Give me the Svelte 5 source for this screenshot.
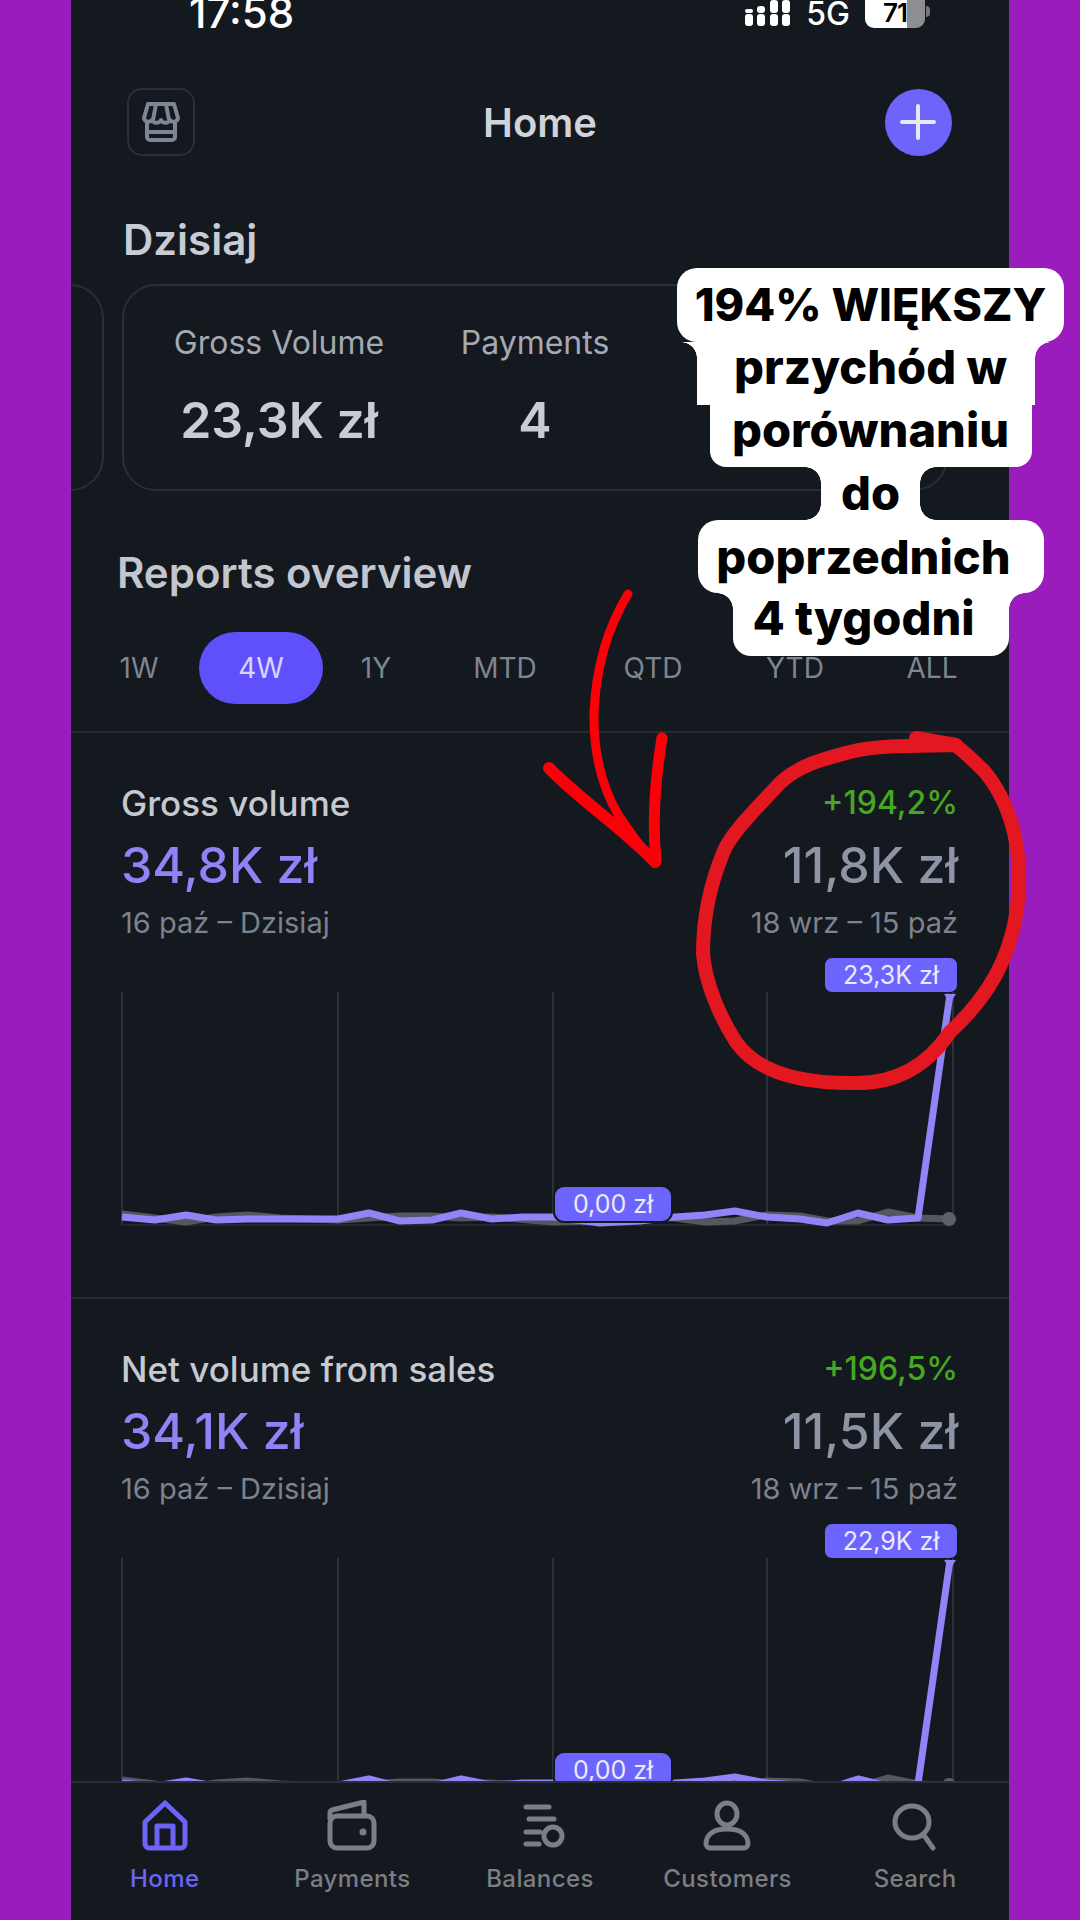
<script>
	const tabs = ['1W', '4W', '1Y', 'MTD', 'QTD', 'YTD', 'ALL'];

	const purple = '122,225 155,228 186,223 216,228 248,227 338,227 369,221 400,229 432,228 461,221 492,227 523,225 553,225 600,231 640,229 675,225 705,223 735,219 767,225 800,227 827,231 858,221 888,228 918,226 950,2'
		.split(' ').map(shift).join(' ');
	const grey = '122,222 155,226 186,230 216,225 248,223 280,226 338,228 369,226 400,224 432,224 461,226 492,225 553,230 600,229 640,222 675,226 705,230 735,229 767,223 800,224 827,229 858,229 888,220 918,226 949,227'
		.split(' ').map(shift).join(' ');

	function shift(p) {
		const [x, y] = p.split(',').map(Number);
		return `${x - 122},${y}`;
	}

	const sections = [
		{ title: 'Gross volume', value: '34,8K zł', change: '+194,2%', prev: '11,8K zł', peak: '23,3K zł' },
		{ title: 'Net volume from sales', value: '34,1K zł', change: '+196,5%', prev: '11,5K zł', peak: '22,9K zł' }
	];
</script>

<div class="phone">
	<div class="status">
		<span class="time">17:58</span>
		<div class="status_right">
			<svg width="46" height="28" viewBox="0 0 46 28" fill="#fff">
				<rect x="0" y="14" width="8" height="12" rx="3" />
				<rect x="12" y="14" width="8" height="12" rx="3" />
				<rect x="25" y="14" width="8" height="12" rx="3" />
				<rect x="37" y="14" width="8" height="12" rx="3" />
				<rect x="0" y="9" width="8" height="4" rx="2" />
				<rect x="12" y="6" width="8" height="7" rx="3" />
				<rect x="25" y="0" width="8" height="13" rx="3" />
				<rect x="37" y="0" width="8" height="13" rx="3" />
			</svg>
			<span class="net">5G</span>
			<div class="battery"><span>71</span></div>
		</div>
	</div>

	<header class="top">
		<button class="store" aria-label="Store">
			<svg width="40" height="40" viewBox="0 0 40 40" fill="none" stroke="#7f8593" stroke-width="4" stroke-linejoin="round">
				<path d="M7 2h26l4 14a4.5 4.5 0 0 1-8 2 5 5 0 0 1-9 0 5 5 0 0 1-9 0 4.5 4.5 0 0 1-8-2z" />
				<path d="M15 2l-3 16M25 2l3 16" />
				<path d="M6 21v14a3 3 0 0 0 3 3h22a3 3 0 0 0 3-3V21M6 30h28" />
			</svg>
		</button>
		<h1>Home</h1>
		<button class="add" aria-label="Add">
			<svg width="36" height="36" viewBox="0 0 36 36" stroke="#e8e8f4" stroke-width="4" stroke-linecap="round">
				<path d="M18 2v32M2 18h32" />
			</svg>
		</button>
	</header>

	<main class="content">
		<h2 class="today">Dzisiaj</h2>
		<div class="cards">
			<div class="card prev_card"></div>
			<div class="card">
				<div class="stat stat_volume">
					<span class="stat_label">Gross Volume</span>
					<span class="stat_value">23,3K zł</span>
				</div>
				<div class="stat stat_payments">
					<span class="stat_label">Payments</span>
					<span class="stat_value">4</span>
				</div>
			</div>
		</div>

		<h2 class="reports">Reports overview</h2>
		<div class="tabs">
			{#each tabs as tab}
				<span class="tab" class:active={tab === '4W'}>{tab}</span>
			{/each}
		</div>

		{#each sections as s}
			<section class="report">
				<div class="report_head">
					<div class="col">
						<span class="title">{s.title}</span>
						<span class="value">{s.value}</span>
						<span class="dates">16 paź – Dzisiaj</span>
					</div>
					<div class="col col_right">
						<span class="change">{s.change}</span>
						<span class="value value_prev">{s.prev}</span>
						<span class="dates">18 wrz – 15 paź</span>
					</div>
				</div>
				<div class="chart">
					<svg width="836" height="240" viewBox="0 0 836 240" fill="none">
						{#each [0, 216, 431, 645, 831] as x}
							<path d="M{x} 0V233" stroke="#2e3238" stroke-width="2" />
						{/each}
						<path d="M0 233H831" stroke="#23272d" stroke-width="2" />
						<polyline points={grey} stroke="#53575e" stroke-width="7" stroke-linejoin="round" />
						<circle cx="827" cy="227" r="7" fill="#5c6068" />
						<polyline points={purple} stroke="#9184f8" stroke-width="7" stroke-linejoin="round" />
						<path d="M822 2h12l-6 9z" fill="#9184f8" />
					</svg>
					<span class="tag tag_peak">{s.peak}</span>
					<span class="tag tag_zero">0,00 zł</span>
				</div>
			</section>
		{/each}
	</main>

	<nav class="nav">
		<div class="nav_item active">
			<svg width="60" height="52" viewBox="0 0 60 52" fill="none" stroke="currentColor" stroke-width="5" stroke-linejoin="round">
				<path d="M30 3L50 22V44a4 4 0 0 1-4 4H14a4 4 0 0 1-4-4V22z" />
				<path d="M22 48V26H38V48" />
			</svg>
			<span>Home</span>
		</div>
		<div class="nav_item">
			<svg width="60" height="52" viewBox="0 0 60 52" fill="none" stroke="currentColor" stroke-width="5" stroke-linejoin="round">
				<path d="M8 20V13a3 3 0 0 1 2-3L42 2V16" />
				<rect x="8" y="16" width="44" height="32" rx="7" />
				<circle cx="41" cy="32" r="3.5" fill="currentColor" stroke="none" />
			</svg>
			<span>Payments</span>
		</div>
		<div class="nav_item">
			<svg width="60" height="52" viewBox="0 0 60 52" fill="none" stroke="currentColor" stroke-width="5" stroke-linecap="round">
				<path d="M16 7H39M19 19H44M16 32H30M16 44H29" />
				<circle cx="43" cy="36" r="9" />
			</svg>
			<span>Balances</span>
		</div>
		<div class="nav_item">
			<svg width="60" height="52" viewBox="0 0 60 52" fill="none" stroke="currentColor" stroke-width="5" stroke-linejoin="round">
				<ellipse cx="29" cy="14" rx="10" ry="11" />
				<path d="M8 44c0-10 8-15 21-15s21 5 21 15a4 4 0 0 1-4 4H12a4 4 0 0 1-4-4z" />
			</svg>
			<span>Customers</span>
		</div>
		<div class="nav_item">
			<svg width="60" height="52" viewBox="0 0 60 52" fill="none" stroke="currentColor" stroke-width="5" stroke-linecap="round">
				<ellipse cx="27" cy="22" rx="17" ry="16" />
				<path d="M38 34L48 48" />
			</svg>
			<span>Search</span>
		</div>
	</nav>

	<!-- naklejka z filmu, leży na ekranie -->
	<div class="sticker">
		<span class="line line_first">194% WIĘKSZY</span>
		<span class="line line_top">przychód w</span>
		<span class="line">porównaniu</span>
		<span class="line line_both">do</span>
		<span class="line line_wide">poprzednich</span>
		<span class="line line_top">4 tygodni</span>
	</div>

	<svg class="scribble" width="1009" height="1920" viewBox="71 0 1009 1920" fill="none" stroke-linecap="round" stroke-linejoin="round">
		<path d="M628 594C606 630 596 670 594 712C593 760 606 800 626 826C640 846 650 858 655 862" stroke="#fa0008" stroke-width="9" />
		<path d="M549 768C580 800 625 830 655 862" stroke="#fa0008" stroke-width="12" />
		<path d="M662 738C655 780 652 820 656 860" stroke="#fa0008" stroke-width="11" />
		<path d="M916 738L956 745C930 746 880 744 850 752C820 760 800 765 781 782C750 815 730 835 723 853C710 885 703 920 703 953C705 985 722 1020 736 1042C757 1072 800 1084 857 1083C900 1083 930 1062 950 1032C985 1000 1012 960 1018 900C1022 860 1016 810 985 772C975 762 965 752 955 745" stroke="#e3171f" stroke-width="14" />
	</svg>
</div>

<style>
	:global(body) {
		margin: 0;
		background: #9a1cbc;
		overflow: hidden;
	}

	.phone {
		position: relative;
		box-sizing: border-box;
		width: 938px;
		height: 1920px;
		margin: 0 0 0 71px;
		background: #14181f;
		color: #c9ccd4;
		font-family: Inter, 'Liberation Sans', sans-serif;
		display: flex;
		flex-direction: column;
	}

	.status {
		height: 88px;
		flex: none;
		display: flex;
		justify-content: space-between;
		align-items: flex-start;
		padding: 0 83px 0 118px;
		box-sizing: border-box;
		color: #fff;
	}

	.time {
		font-size: 42px;
		font-weight: 500;
		line-height: 42px;
		margin-top: -8px;
	}

	.status_right {
		display: flex;
		align-items: flex-start;
		gap: 15px;
		margin-right: 1px;
	}

	.net {
		font-size: 32px;
		font-weight: 500;
		line-height: 32px;
		margin-top: -2px;
	}

	.battery {
		position: relative;
		width: 60px;
		height: 28px;
		border-radius: 0 0 9px 9px;
		background: linear-gradient(90deg, #fff 70%, #8e8e90 70%);
		color: #000;
		font-size: 26px;
		font-weight: 600;
		line-height: 26px;
		letter-spacing: -1px;
		text-align: center;
	}

	.battery::after {
		content: '';
		position: absolute;
		right: -5px;
		top: 6px;
		width: 4px;
		height: 11px;
		border-radius: 0 4px 4px 0;
		background: #77777a;
	}

	.top {
		display: flex;
		justify-content: space-between;
		align-items: center;
		padding: 0 57px 0 56px;
		height: 68px;
		flex: none;
	}

	.top h1 {
		margin: 0;
		font-size: 40px;
		font-weight: 600;
		color: #d0d3da;
	}

	button {
		padding: 0;
		display: flex;
		align-items: center;
		justify-content: center;
	}

	.store {
		width: 68px;
		height: 68px;
		border: 2px solid #2a2e35;
		border-radius: 15px;
		background: none;
	}

	.add {
		width: 67px;
		height: 67px;
		border: none;
		border-radius: 50%;
		background: #6e64fa;
	}

	.content {
		flex: 1;
		overflow: hidden;
		min-height: 0;
	}

	.today {
		margin: 61px 0 0 52px;
		font-size: 42px;
		line-height: 46px;
		font-weight: 600;
		color: #c9ccd4;
	}

	.cards {
		display: flex;
		gap: 18px;
		margin-top: 21px;
		margin-left: -100px;
	}

	.card {
		box-sizing: border-box;
		width: 826px;
		height: 207px;
		border: 2px solid #2a2e35;
		border-radius: 34px;
		flex: none;
		position: relative;
		display: flex;
	}

	.prev_card {
		width: 133px;
	}

	.stat {
		display: flex;
		flex-direction: column;
		align-items: center;
		padding-top: 38px;
	}

	.stat_volume {
		width: 212px;
		margin-left: 49px;
	}

	.stat_payments {
		width: 152px;
		margin-left: 74px;
	}

	.stat_label {
		font-size: 32px;
		line-height: 38px;
		color: #a5a9b2;
		white-space: nowrap;
	}

	.stat_value {
		font-size: 50px;
		line-height: 60px;
		font-weight: 600;
		color: #c9ccd4;
		margin-top: 28px;
		white-space: nowrap;
	}

	.reports {
		margin: 58px 0 0 46px;
		font-size: 42px;
		line-height: 48px;
		font-weight: 600;
		color: #c3c6cf;
	}

	.tabs {
		display: flex;
		align-items: center;
		margin-top: 35px;
		height: 72px;
		padding-left: 47px;
	}

	.tab {
		font-size: 28px;
		color: #7f8591;
		flex: none;
		text-align: center;
	}

	.tab:nth-child(1) {
		width: 42px;
	}
	.tab:nth-child(2) {
		width: 124px;
		margin-left: 39px;
	}
	.tab:nth-child(3) {
		width: 40px;
		margin-left: 33px;
	}
	.tab:nth-child(4) {
		width: 64px;
		margin-left: 77px;
	}
	.tab:nth-child(5) {
		width: 64px;
		margin-left: 84px;
	}
	.tab:nth-child(6) {
		width: 56px;
		margin-left: 81px;
	}
	.tab:nth-child(7) {
		width: 52px;
		margin-left: 84px;
	}

	.tab.active {
		background: #5f50fb;
		color: #d8d6ff;
		height: 72px;
		line-height: 72px;
		border-radius: 36px;
	}

	.report {
		box-sizing: border-box;
		height: 566px;
		border-top: 2px solid #282c32;
		margin-top: 27px;
		padding: 51px 51px 0;
	}

	.report + .report {
		margin-top: 0;
	}

	.report_head {
		display: flex;
		justify-content: space-between;
	}

	.col {
		display: flex;
		flex-direction: column;
	}

	.col_right {
		align-items: flex-end;
	}

	.title {
		font-size: 35px;
		line-height: 38px;
		font-weight: 500;
		color: #c6c9d0;
		margin-left: -1px;
	}

	.change {
		font-size: 32px;
		line-height: 38px;
		font-weight: 500;
		color: #46a820;
	}

	.value {
		font-size: 50px;
		line-height: 66px;
		font-weight: 500;
		color: #8f83f5;
		margin-top: 10px;
		margin-left: -1px;
	}

	.value_prev {
		color: #8e94a3;
	}

	.dates {
		font-size: 29px;
		line-height: 36px;
		color: #7d828c;
		margin-top: 7px;
		margin-left: -1px;
	}

	.chart {
		position: relative;
		margin-top: 51px;
		height: 240px;
	}

	.chart svg {
		display: block;
		overflow: visible;
	}

	.tag {
		position: absolute;
		box-sizing: border-box;
		height: 34px;
		line-height: 34px;
		text-align: center;
		font-size: 25px;
		color: #eceafe;
		background: #6c64fc;
		border-radius: 7px;
	}

	.tag_peak {
		left: 703px;
		top: -34px;
		width: 132px;
	}

	.tag_zero {
		left: 431px;
		top: 193px;
		width: 120px;
		height: 38px;
		line-height: 34px;
		border: 2px solid #14181f;
		border-radius: 11px;
	}

	.nav {
		flex: none;
		box-sizing: border-box;
		height: 139px;
		background: #14181f;
		border-top: 2px solid #2a2e35;
		display: grid;
		grid-template-columns: repeat(5, 1fr);
		padding-top: 17px;
		position: relative;
	}

	.nav_item {
		display: flex;
		flex-direction: column;
		align-items: center;
		color: #7c7e83;
		font-size: 24px;
		font-weight: 500;
		letter-spacing: 0.4px;
		line-height: 30px;
		gap: 12px;
	}

	.nav_item.active {
		color: #6c64f5;
	}

	.sticker {
		position: absolute;
		left: 606px;
		top: 268px;
		width: 387px;
		display: flex;
		flex-direction: column;
		align-items: center;
		font-weight: 800;
		font-size: 47px;
		color: #000;
	}

	.line {
		position: relative;
		box-sizing: border-box;
		background: #fff;
		text-align: center;
		white-space: nowrap;
	}

	.line:nth-child(1) {
		width: 387px;
		height: 74px;
		line-height: 74px;
		font-size: 45px;
		border-radius: 20px;
		z-index: 1;
	}
	.line:nth-child(2) {
		width: 338px;
		height: 63px;
		line-height: 50px;
		margin-left: -10px;
		padding-left: 10px;
	}
	.line:nth-child(3) {
		width: 322px;
		height: 62px;
		line-height: 50px;
		border-radius: 0 0 16px 16px;
	}
	.line:nth-child(4) {
		width: 99px;
		height: 53px;
		line-height: 52px;
	}
	.line:nth-child(5) {
		width: 346px;
		height: 73px;
		line-height: 74px;
		padding-right: 14px;
		border-radius: 20px;
		z-index: 1;
	}
	.line:nth-child(6) {
		width: 276px;
		height: 63px;
		line-height: 50px;
		padding-right: 14px;
		border-radius: 0 0 18px 18px;
	}

	.line_top::before,
	.line_top::after,
	.line_both::before,
	.line_both::after {
		content: '';
		position: absolute;
		top: 0;
		bottom: 0;
		width: 16px;
		background-repeat: no-repeat;
		background-size: 16px 16px;
	}

	.line_top::before,
	.line_both::before {
		left: -16px;
	}

	.line_top::after,
	.line_both::after {
		right: -16px;
	}

	.line_top::before {
		background-image: radial-gradient(circle at 0 100%, transparent 15.5px, #fff 16px);
		background-position: 0 0;
	}

	.line_top::after {
		background-image: radial-gradient(circle at 100% 100%, transparent 15.5px, #fff 16px);
		background-position: 0 0;
	}

	.line_both::before {
		background-image: radial-gradient(circle at 0 100%, transparent 15.5px, #fff 16px), radial-gradient(circle at 0 0, transparent 15.5px, #fff 16px);
		background-position: 0 0, 0 100%;
	}

	.line_both::after {
		background-image: radial-gradient(circle at 100% 100%, transparent 15.5px, #fff 16px), radial-gradient(circle at 100% 0, transparent 15.5px, #fff 16px);
		background-position: 0 0, 0 100%;
	}

	.scribble {
		position: absolute;
		left: 0;
		top: 0;
		pointer-events: none;
	}
</style>
